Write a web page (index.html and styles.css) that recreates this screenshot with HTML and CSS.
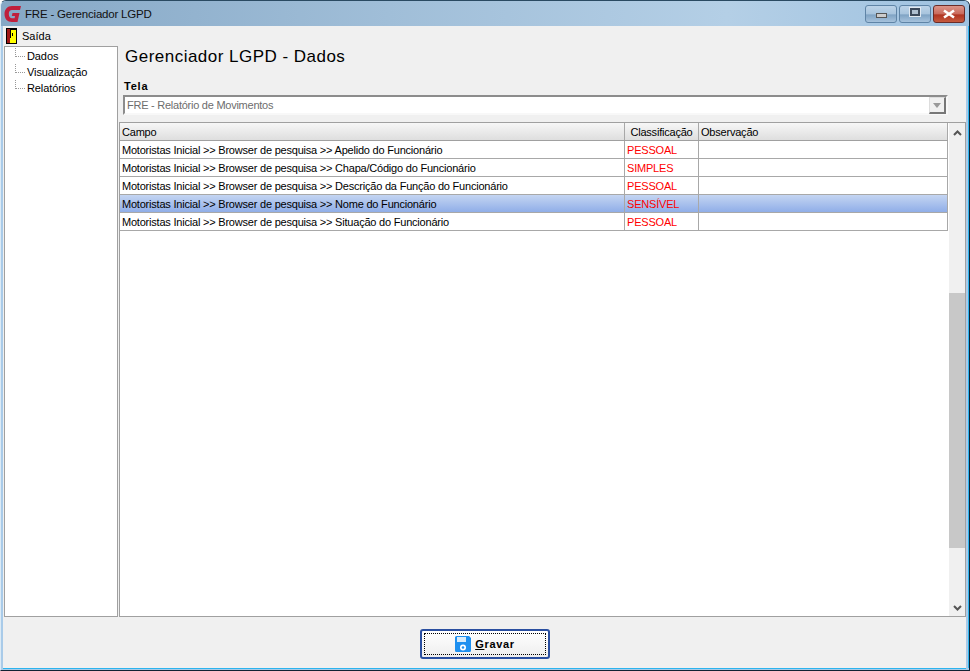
FILE: index.html
```html
<!DOCTYPE html>
<html lang="pt">
<head>
<meta charset="utf-8">
<title>FRE - Gerenciador LGPD</title>
<link rel="stylesheet" href="styles.css">
</head>
<body>
<div class="window">
  <div class="titlebar">
    <svg class="appicon" viewBox="0 0 18 18" width="18" height="18"><path d="M17 1H8C3.500 1 .5 4.500 .5 9 .5 14 3.500 17 8 17H13.500L15.500 8H8.500L7.800 11H11L10.600 13.200H8C6 13.200 4.800 11.500 4.800 9 4.800 6.500 6 5 8 5H16Z" fill="#c01f3c"/></svg>
    <span class="wintitle">FRE - Gerenciador LGPD</span>
    <div class="controls">
      <div class="ctl"><span class="min-glyph"></span></div>
      <div class="ctl"><span class="max-glyph"></span></div>
      <div class="ctl close"><svg viewBox="0 0 14 10" width="14" height="10"><path d="M2 1.500 12 8.500M12 1.500 2 8.500" stroke="#fff" stroke-width="2.600" fill="none"/></svg></div>
    </div>
  </div>
  <div class="client">
    <div class="menu">
      <svg class="exiticon" viewBox="0 0 11 16" width="11" height="16"><rect width="11" height="16" fill="#000"/><rect x="1" y="1" width="3" height="14" fill="#a01818"/><rect x="4" y="2" width="6" height="13" fill="#ffff00"/><rect x="4" y="2" width="1" height="8" fill="#000"/><rect x="6" y="5" width="1" height="3" fill="#000"/></svg>
      <span>Saída</span>
    </div>
    <div class="body">
      <nav class="tree">
        <div class="node">Dados</div>
        <div class="node">Visualização</div>
        <div class="node">Relatórios</div>
      </nav>
      <main class="main">
        <h1 class="heading">Gerenciador LGPD - Dados</h1>
        <div class="label">Tela</div>
        <div class="combo">
          <span class="combo-text">FRE - Relatório de Movimentos</span>
          <div class="combo-btn"><span class="arrow"></span></div>
        </div>
        <div class="grid">
          <div class="grid-table">
            <div class="row head">
              <div class="cell c1">Campo</div>
              <div class="cell c2 center">Classificação</div>
              <div class="cell c3">Observação</div>
            </div>
            <div class="row">
              <div class="cell c1">Motoristas Inicial &gt;&gt; Browser de pesquisa &gt;&gt; Apelido do Funcionário</div>
              <div class="cell c2 red">PESSOAL</div>
              <div class="cell c3"></div>
            </div>
            <div class="row">
              <div class="cell c1">Motoristas Inicial &gt;&gt; Browser de pesquisa &gt;&gt; Chapa/Código do Funcionário</div>
              <div class="cell c2 red">SIMPLES</div>
              <div class="cell c3"></div>
            </div>
            <div class="row">
              <div class="cell c1">Motoristas Inicial &gt;&gt; Browser de pesquisa &gt;&gt; Descrição da Função do Funcionário</div>
              <div class="cell c2 red">PESSOAL</div>
              <div class="cell c3"></div>
            </div>
            <div class="row selected">
              <div class="cell c1">Motoristas Inicial &gt;&gt; Browser de pesquisa &gt;&gt; Nome do Funcionário</div>
              <div class="cell c2 red">SENSÍVEL</div>
              <div class="cell c3"></div>
            </div>
            <div class="row">
              <div class="cell c1">Motoristas Inicial &gt;&gt; Browser de pesquisa &gt;&gt; Situação do Funcionário</div>
              <div class="cell c2 red">PESSOAL</div>
              <div class="cell c3"></div>
            </div>
          </div>
          <div class="scrollbar">
            <svg viewBox="0 0 9 6" width="9" height="6"><path d="M1 5 4.500 1.500 8 5" stroke="#555" stroke-width="2" fill="none"/></svg>
            <div class="track"><div class="thumb"></div></div>
            <svg viewBox="0 0 9 6" width="9" height="6"><path d="M1 1 4.500 4.500 8 1" stroke="#555" stroke-width="2" fill="none"/></svg>
          </div>
        </div>
      </main>
    </div>
    <div class="footer">
      <button class="save" type="button">
        <span class="save-inner">
          <svg viewBox="0 0 16 16" width="16" height="16"><path d="M0 1.500A1.500 1.500 0 0 1 1.500 0H14L16 2V14.500A1.500 1.500 0 0 1 14.500 16H1.500A1.500 1.500 0 0 1 0 14.500Z" fill="#1e90f0"/><rect x="2" y="1" width="9" height="5" fill="#d8ecfb"/><circle cx="8" cy="11.500" r="3" fill="#fff"/><circle cx="8" cy="11.500" r="1.300" fill="#1e90f0"/></svg>
          <span class="save-label"><u>G</u>ravar</span>
        </span>
      </button>
    </div>
  </div>
</div>
</body>
</html>
```
FILE: styles.css
```css
* { box-sizing: border-box; }
html, body { margin: 0; padding: 0; }
body {
  width: 970px;
  height: 671px;
  overflow: hidden;
  font-family: "Liberation Sans", sans-serif;
  font-size: 11px;
  color: #000;
}
.window {
  width: 970px;
  height: 671px;
  display: flex;
  flex-direction: column;
  background: #a9cbe9;
  border: 1px solid #2a4a62;
  border-left-color: #dceaf5;
  border-bottom-color: #123;
  border-right-color: #123;
  border-radius: 6px 6px 0 0;
  overflow: hidden;
}
.titlebar {
  height: 25px;
  flex: none;
  display: flex;
  align-items: center;
  padding-left: 3px;
  background: linear-gradient(90deg, #86a8c6 0%, #a0bed8 40%, #b4cfe6 75%, #9fc2e0 100%);
}
.appicon { margin-top: 1px; }
.wintitle {
  margin-left: 3px;
  font-size: 11.500px;
  color: #111;
  letter-spacing: -0.2px;
}
.controls {
  margin-left: auto;
  margin-right: 4px;
  align-self: flex-start;
  display: flex;
  gap: 2px;
  margin-top: 4px;
}
.ctl {
  width: 32px;
  height: 18px;
  border: 1px solid #5f84a6;
  border-radius: 3px;
  background: linear-gradient(#bcd3e8 0%, #a8c4dd 50%, #7fa3c4 55%, #a6c2dc 100%);
  display: flex;
  align-items: center;
  justify-content: center;
}
.ctl.close {
  border-color: #6a2c28;
  background: linear-gradient(#dc9488 0%, #c96a5c 50%, #b03422 55%, #c55a3e 100%);
}
.min-glyph {
  width: 11px;
  height: 5px;
  margin-top: 3px;
  background: #ccc;
  border: 1px solid #555;
}
.max-glyph {
  width: 10px;
  height: 8px;
  margin-top: -4px;
  background: #aebfd0;
  border: 2px solid #3c4a5c;
  outline: 1px solid #e0e8f0;
}
.client {
  flex: 1;
  margin: 0 3px 2px 2px;
  display: flex;
  flex-direction: column;
  background: #f0f0f0;
  min-height: 0;
  box-shadow: 2px 0 0 #a9cbe9, 3px 0 0 #2cb4ee, 0 1px 0 #2cb4ee;
}
.menu {
  height: 20px;
  flex: none;
  display: flex;
  align-items: center;
  gap: 5px;
  padding-left: 3px;
}
.body {
  flex: 1;
  display: flex;
  gap: 1px;
  padding-left: 1px;
  min-height: 0;
}
.tree {
  width: 114px;
  flex: none;
  background: #fff;
  border: 1px solid #a0a0a0;
  padding-top: 1px;
}
.node {
  height: 16px;
  line-height: 16px;
  padding-left: 22px;
  position: relative;
  letter-spacing: -0.1px;
}
.node::before {
  content: "";
  position: absolute;
  left: 10px;
  top: 8px;
  width: 10px;
  border-top: 1px dotted #999;
}
.node::after {
  content: "";
  position: absolute;
  left: 10px;
  top: 0;
  height: 9px;
  border-left: 1px dotted #999;
}
.main {
  flex: 1;
  display: flex;
  flex-direction: column;
  min-width: 0;
}
.heading {
  margin: 1px 0 0 6px;
  height: 20px;
  line-height: 20px;
  font-size: 17px;
  font-weight: normal;
  letter-spacing: 0.48px;
}
.label {
  margin: 13px 0 0 5px;
  height: 13px;
  line-height: 13px;
  font-weight: bold;
  letter-spacing: 0.8px;
}
.combo {
  margin: 2px 18px 0 4px;
  height: 20px;
  display: flex;
  align-items: center;
  background: #fff;
  border: 2px solid #8c8c8c;
  border-right-color: #f8f8f8;
  border-bottom-color: #f8f8f8;
  flex: none;
}
.combo-text {
  padding-left: 2px;
  color: #6d6d6d;
  letter-spacing: -0.25px;
}
.combo-btn {
  margin-left: auto;
  width: 17px;
  height: 17px;
  margin-top: 1px;
  background: #f0f0f0;
  border-left: 1px solid #ddd;
  border-top: 1px solid #ddd;
  border-right: 2px solid #777;
  border-bottom: 2px solid #777;
  display: flex;
  align-items: center;
  justify-content: center;
}
.arrow {
  width: 0;
  height: 0;
  border-left: 4px solid transparent;
  border-right: 4px solid transparent;
  border-top: 5px solid #999;
}
.grid {
  flex: 1;
  margin-top: 7px;
  display: flex;
  background: #fff;
  border: 1px solid #a0a0a0;
  min-height: 0;
}
.grid-table {
  flex: 1;
  min-width: 0;
  padding-right: 1px;
}
.row {
  display: flex;
  height: 18px;
  border-bottom: 1px solid #a8a8a8;
}
.row.head {
  background: linear-gradient(#f7f7f7, #dedede);
  border-bottom-color: #a0a0a0;
}
.row.selected {
  background: linear-gradient(#c4d5f2, #90aee8);
}
.cell {
  padding: 1px 0 0 2px;
  line-height: 17px;
  white-space: nowrap;
  overflow: hidden;
  border-right: 1px solid #a8a8a8;
  letter-spacing: -0.21px;
}
.c1 { width: 505px; flex: none; }
.c2 { width: 74px; flex: none; }
.c3 { flex: 1; }
.center { text-align: center; padding-left: 0; }
.red { color: #f00; letter-spacing: -0.2px; }
.scrollbar {
  width: 16px;
  flex: none;
  background: #f0f0f0;
  display: flex;
  flex-direction: column;
  align-items: center;
  padding: 7px 0 5px;
}
.track {
  flex: 1;
  width: 100%;
  padding-top: 157px;
  padding-bottom: 57px;
  display: flex;
}
.thumb {
  flex: 1;
  width: 100%;
  background: #c8c8c8;
}
.footer {
  height: 51px;
  flex: none;
  display: flex;
  justify-content: center;
  align-items: flex-start;
  padding: 12px 0 0 1px;
}
.save {
  width: 130px;
  height: 30px;
  margin: 0;
  padding: 2px;
  background: linear-gradient(#fff, #eee);
  border: 2px solid #2a4fa0;
  border-radius: 3px;
  font: inherit;
  display: flex;
}
.save-inner {
  flex: 1;
  display: flex;
  align-items: center;
  justify-content: center;
  gap: 4px;
  border: 1px dotted #000;
}
.save-label {
  font-weight: bold;
  letter-spacing: 0.7px;
}
```
